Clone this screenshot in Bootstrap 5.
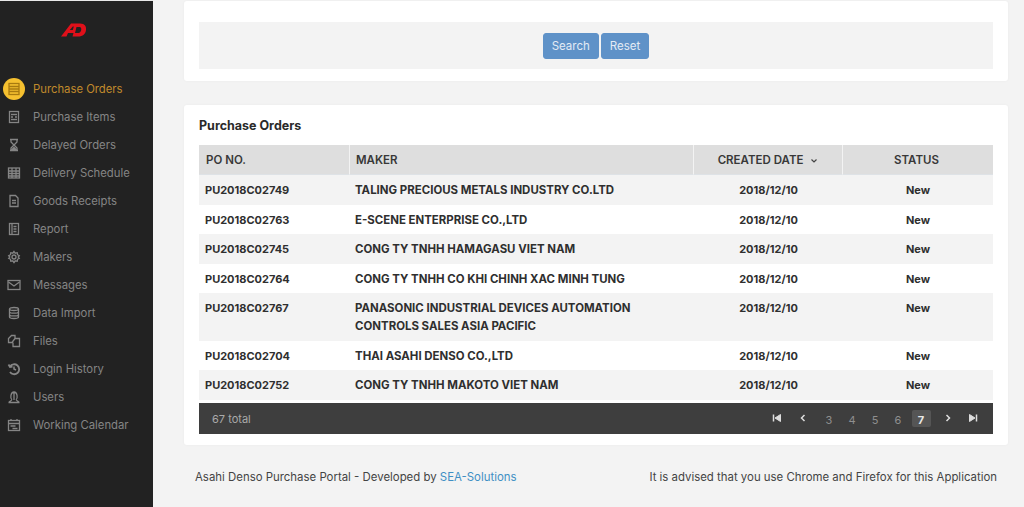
<!DOCTYPE html>
<html lang="en"><head><meta charset="utf-8"><title>Purchase Orders</title>
<link href="https://cdn.jsdelivr.net/npm/bootstrap@5.3.0/dist/css/bootstrap.min.css" rel="stylesheet">
<script src="https://cdn.jsdelivr.net/npm/bootstrap@5.3.0/dist/js/bootstrap.bundle.min.js"></script>
<style>
html,body{height:507px;overflow:hidden}
body{background:#f3f3f3;font-family:"Inter","Open Sans",sans-serif;font-size:12px;color:#333}
.side{width:153px;height:507px;background:#222;flex:none;border-top:1px solid #e8e8e8}
.logo-box{height:74px;padding:22px 0 0 61px}
.side-link{height:28px;color:#858585;font-size:11.3px;padding-left:3px;gap:8px;white-space:nowrap}
.side-link.on{color:#c08a2c}
.ico{width:22px;height:22px;flex:none;display:flex;align-items:center;justify-content:center}
.side-link.on .ico{background:#f5c02f;border-radius:50%}
.ico svg{width:14px;height:14px;fill:none;stroke:#858585;stroke-width:1.3}
.side-link.on .ico svg{stroke:#a87a10}
.content{flex:1;padding:1px 16px 0 31px;min-width:0}
.panel{background:#fff;border-radius:3px;box-shadow:0 0 3px rgba(0,0,0,.04)}
.first-panel{height:80px;padding:21px 15px 12px;margin-bottom:24px}
.search-box{background:#f3f3f3;height:47px;gap:2px}
.btn-soft{background:#5f92c8;border:1px solid #5f92c8;color:#e3ebf5;font-size:11.5px;padding:1px 8px 0;height:26px;line-height:23px;border-radius:3px}
.btn-soft:hover{background:#5f92c8;color:#fff}
.second-panel{height:340px;padding:13px 15px 0}
.ttl{font-size:12.5px;font-weight:700;height:27px;line-height:15px;color:#2a2a2a;margin:0}
.po{table-layout:fixed;width:794px;margin:0;font-size:11px;font-weight:700;color:#2f2f2f;border-collapse:separate;border-spacing:0}
.po th{background:#dedede;height:30px;padding:3px 6px 0;vertical-align:middle;font-size:11.5px;font-weight:600;color:#383838;border-right:1px solid #f3f3f3}
.po th:first-child{padding-left:7px}
.po th:last-child{border-right:0;padding-right:9px}
.po td{padding:7px 6px 5px;vertical-align:top;line-height:17.6px;background:#fff;border:0}
.po td:nth-child(2){padding-left:5px;font-size:11.44px}
.po tbody tr:nth-child(odd) td{background:#f3f3f3}
.pager{background:#3e3e3e;height:31px;margin-top:3px;padding:1px 8.5px 0 13px;color:#aaa;font-size:11px}
.pg{width:23px;height:17px;display:flex;align-items:center;justify-content:center;color:#8f8f8f;font-size:11px;border-radius:2px;padding-top:2px}
.pg.sym{padding:0 0 2px}
.pg.gap-r{margin-right:3px}
.pg.cur{width:19px;background:#555;color:#e8e8e8;font-weight:700;margin:0 2px}
.pg.after-cur{margin-left:4px;margin-right:2px}
.pg svg{width:10px;height:10px;fill:#ddd;stroke:#ddd}
.foot{padding:24px 11px 0;font-size:11.42px;color:#444;line-height:16px}
.foot a{color:#3f8fc4;text-decoration:none}
</style></head>
<body class="d-flex">
<nav class="side">
 <div class="logo-box d-flex"><svg width="26" height="14" viewBox="0 0 26 14"><path d="M0 13.500L10 .5H19C24 .5 25.500 3.500 25 7C24.500 11 22 13.500 17 13.500H11.500L12.500 10H7L5.500 13.500ZM8.800 7L11.800 3.500 12.800 3.500 11.800 7ZM15.500 4L14 10H17.500C20.500 10 21.500 4 18.500 4Z" fill="#e0101a" fill-rule="evenodd"/></svg></div>
 <a class="side-link on d-flex align-items-center text-decoration-none"><span class="ico"><svg viewBox="0 0 14 14"><rect x="2" y="1.500" width="10" height="11"/><path d="M2 4.500h10M2 7h10M2 9.500h10"/></svg></span>Purchase Orders</a>
 <a class="side-link d-flex align-items-center text-decoration-none"><span class="ico"><svg viewBox="0 0 14 14"><rect x="2.500" y="1.500" width="9" height="11"/><path d="M4 4.500h6M4 7h2M8 7h2M4 9.500h6"/></svg></span>Purchase Items</a>
 <a class="side-link d-flex align-items-center text-decoration-none"><span class="ico"><svg viewBox="0 0 14 14"><path d="M3 1.500h8M3 12.500h8M4 2v2l3 3 3-3V2M4 12v-2l3-3 3 3v2"/><path d="M5 11.500h4L7 9.500z" fill="#858585"/></svg></span>Delayed Orders</a>
 <a class="side-link d-flex align-items-center text-decoration-none"><span class="ico"><svg viewBox="0 0 14 14"><rect x="1.500" y="2" width="11" height="10"/><path d="M1.500 5h11M1.500 7.500h11M1.500 10h11M5 2v10M9 2v10"/></svg></span>Delivery Schedule</a>
 <a class="side-link d-flex align-items-center text-decoration-none"><span class="ico"><svg viewBox="0 0 14 14"><path d="M3 1.500h5.500L11 4v8.500H3zM5 6.500h4M5 9h4"/></svg></span>Goods Receipts</a>
 <a class="side-link d-flex align-items-center text-decoration-none"><span class="ico"><svg viewBox="0 0 14 14"><rect x="2.500" y="1.500" width="9" height="11"/><path d="M5 1.500v11M6.500 4.500h3M6.500 7h3M6.500 9.500h3"/></svg></span>Report</a>
 <a class="side-link d-flex align-items-center text-decoration-none"><span class="ico"><svg viewBox="0 0 14 14"><circle cx="7" cy="7" r="2"/><path d="M7 1.500l1.200 1.700 2-.5.300 2 1.800 1L11.200 7l1.100 1.300-1.800 1-.3 2-2-.5L7 12.500l-1.200-1.700-2 .5-.3-2-1.800-1L2.800 7 1.700 5.700l1.800-1 .3-2 2 .5z"/></svg></span>Makers</a>
 <a class="side-link d-flex align-items-center text-decoration-none"><span class="ico"><svg viewBox="0 0 14 14"><rect x="1" y="2.500" width="12" height="9"/><path d="M1.500 4l5.500 4 5.500-4"/></svg></span>Messages</a>
 <a class="side-link d-flex align-items-center text-decoration-none"><span class="ico"><svg viewBox="0 0 14 14"><ellipse cx="7" cy="3" rx="4.500" ry="1.500"/><path d="M2.500 3v8c0 2 9 2 9 0V3M2.500 5.700c0 2 9 2 9 0M2.500 8.400c0 2 9 2 9 0"/></svg></span>Data Import</a>
 <a class="side-link d-flex align-items-center text-decoration-none"><span class="ico"><svg viewBox="0 0 14 14"><path d="M4.500 1.500H8v3L5 8.500H1.500V4.500zM8 4.500h4.500v8H6V8.500"/></svg></span>Files</a>
 <a class="side-link d-flex align-items-center text-decoration-none"><span class="ico"><svg viewBox="0 0 14 14"><path d="M3 4.500A5 5 0 1 1 3 10M1.500 2.500L3 5l2.500-.5" stroke-width="1.800"/><path d="M7 4.500V7l2 1" stroke-width="1.500"/></svg></span>Login History</a>
 <a class="side-link d-flex align-items-center text-decoration-none"><span class="ico"><svg viewBox="0 0 14 14"><path d="M1.500 12.500h11M5 10C3 8.500 3.500 2 7 2s4 6.500 2 8M5 10l-3 2M9 10l3 2M7 2v8"/></svg></span>Users</a>
 <a class="side-link d-flex align-items-center text-decoration-none"><span class="ico"><svg viewBox="0 0 14 14"><rect x="1.500" y="2.500" width="11" height="10"/><path d="M1.500 5.500h11M4 1v2M10 1v2M3.500 8h5M5.500 10.500h5"/></svg></span>Working Calendar</a>
</nav>
<main class="content">
 <section class="panel first-panel">
  <div class="search-box d-flex justify-content-center align-items-center">
   <button class="btn btn-soft" type="button">Search</button><button class="btn btn-soft" type="button">Reset</button>
  </div>
 </section>
 <section class="panel second-panel">
  <h6 class="ttl">Purchase Orders</h6>
  <table class="table po">
   <colgroup><col style="width:151px"><col style="width:344px"><col style="width:149px"><col style="width:150px"></colgroup>
   <thead><tr><th>PO NO.</th><th>MAKER</th><th class="text-center">CREATED DATE <svg width="8" height="8" viewBox="0 0 8 8" class="ms-1"><path d="M1.500 2.500L4 5l2.500-2.500" fill="none" stroke="#444" stroke-width="1.200"/></svg></th><th class="text-center">STATUS</th></tr></thead>
   <tbody>
    <tr><td>PU2018C02749</td><td>TALING PRECIOUS METALS INDUSTRY CO.LTD</td><td class="text-center">2018/12/10</td><td class="text-center">New</td></tr>
    <tr><td>PU2018C02763</td><td>E-SCENE ENTERPRISE CO.,LTD</td><td class="text-center">2018/12/10</td><td class="text-center">New</td></tr>
    <tr><td>PU2018C02745</td><td>CONG TY TNHH HAMAGASU VIET NAM</td><td class="text-center">2018/12/10</td><td class="text-center">New</td></tr>
    <tr><td>PU2018C02764</td><td>CONG TY TNHH CO KHI CHINH XAC MINH TUNG</td><td class="text-center">2018/12/10</td><td class="text-center">New</td></tr>
    <tr><td>PU2018C02767</td><td>PANASONIC INDUSTRIAL DEVICES AUTOMATION<br>CONTROLS SALES ASIA PACIFIC</td><td class="text-center">2018/12/10</td><td class="text-center">New</td></tr>
    <tr><td>PU2018C02704</td><td>THAI ASAHI DENSO CO.,LTD</td><td class="text-center">2018/12/10</td><td class="text-center">New</td></tr>
    <tr><td>PU2018C02752</td><td>CONG TY TNHH MAKOTO VIET NAM</td><td class="text-center">2018/12/10</td><td class="text-center">New</td></tr>
   </tbody>
  </table>
  <div class="pager d-flex align-items-center justify-content-between">
   <span>67 total</span>
   <div class="d-flex align-items-center">
    <span class="pg sym gap-r"><svg viewBox="0 0 10 10"><path d="M1.500 1.500v7" fill="none" stroke-width="1.500"/><path d="M8.500 1.500v7L3 5z"/></svg></span>
    <span class="pg sym gap-r"><svg viewBox="0 0 10 10"><path d="M6.500 2L3.500 5l3 3" fill="none" stroke-width="1.500"/></svg></span>
    <span class="pg">3</span><span class="pg">4</span><span class="pg">5</span><span class="pg">6</span><span class="pg cur">7</span>
    <span class="pg sym after-cur"><svg viewBox="0 0 10 10"><path d="M3.500 2L6.500 5l-3 3" fill="none" stroke-width="1.500"/></svg></span>
    <span class="pg sym"><svg viewBox="0 0 10 10"><path d="M8.500 1.500v7" fill="none" stroke-width="1.500"/><path d="M1.500 1.500v7L7 5z"/></svg></span>
   </div>
  </div>
 </section>
 <footer class="foot d-flex justify-content-between"><span>Asahi Denso Purchase Portal - Developed by <a href="#">SEA-Solutions</a></span><span>It is advised that you use Chrome and Firefox for this Application</span></footer>
</main>
</body></html>
